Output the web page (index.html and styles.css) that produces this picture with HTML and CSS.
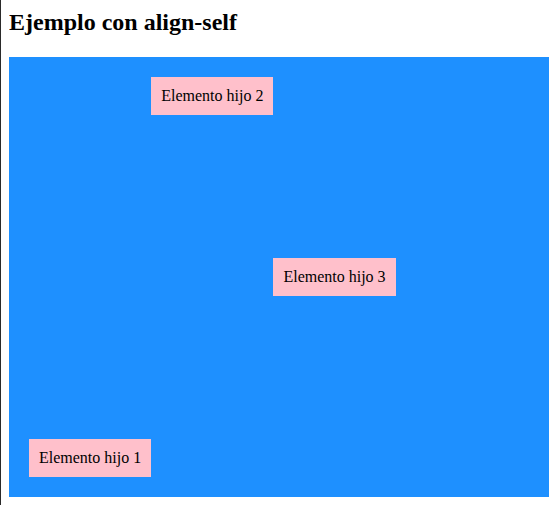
FILE: index.html
```html
<!DOCTYPE html>
<html lang="es">
<head>
<meta charset="utf-8">
<title>Ejemplo con align-self</title>
<link rel="stylesheet" href="styles.css">
</head>
<body>
<h2 class="title">Ejemplo con align-self</h2>
<div class="container">
  <div class="item item-end">Elemento hijo 1</div>
  <div class="item item-start">Elemento hijo 2</div>
  <div class="item item-center">Elemento hijo 3</div>
</div>
</body>
</html>
```

FILE: styles.css
```css
html {
  border-left: 1px solid #2a2a2a;
  background: #fff;
}
body {
  margin: 8px 0 8px 8px;
  font-family: "Liberation Serif", "Times New Roman", serif;
  color: #000;
}
.title {
  margin: 0 0 21px;
  font-size: 24px;
  line-height: 28px;
  font-weight: bold;
}
.container {
  display: flex;
  box-sizing: border-box;
  width: 540px;
  height: 440px;
  padding: 20px;
  background: #1e90ff;
}
.item {
  padding: 10px;
  background: #ffc0cb;
  font-size: 16px;
}
.item-end { align-self: flex-end; }
.item-start { align-self: flex-start; }
.item-center { align-self: center; }
```
